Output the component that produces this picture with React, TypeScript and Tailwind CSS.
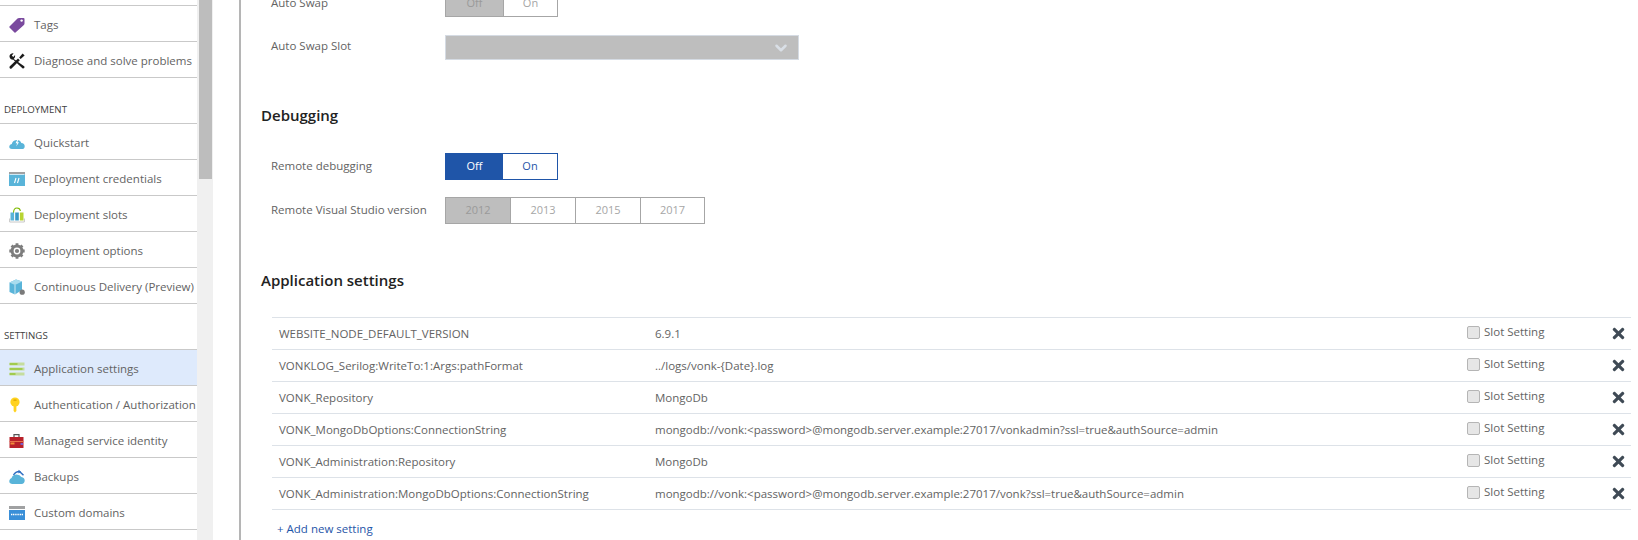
import { FaTimes } from "react-icons/fa";
import { ChevronDown } from "lucide-react";

function TagIcon() {
  return (
    <svg width="16" height="16" viewBox="0 0 16 16">
      <path d="M0.5 9.5 L8.5 1.5 Q9.2 0.9 10 0.9 L14.5 0.9 Q15.5 0.9 15.5 2 L15.5 6.5 Q15.5 7.3 14.9 7.9 L6.5 15.5 Q6 16 5.5 15.5 L0.5 10.5 Q0 10 0.5 9.5Z" fill="#7a4a9e" />
      <circle cx="12.6" cy="3.6" r="1.2" fill="#fff" />
    </svg>
  );
}

function ToolsIcon() {
  return (
    <svg width="16" height="16" viewBox="0 0 16 16">
      <path d="M0.6 13.6 L9 5.4 L10.8 7.2 L2.6 15.6 Q1.6 16 0.8 15.2 Q0.2 14.4 0.6 13.6Z" fill="#1b1b1b" />
      <path d="M10.2 4.6 L13.6 0.6 L15.6 2.4 L11.6 6Z" fill="#1b1b1b" />
      <path d="M0.5 4 Q0.3 1 3.6 0.3 L4.6 0.4 L2.8 2.4 L4.2 3.9 L6.1 2 Q6.6 4.8 4.8 6 L15.2 13.2 Q15.9 14 15.2 15 Q14.4 15.8 13.4 15.2 L4 6.6 Q1.4 7 0.5 4Z" fill="#1b1b1b" />
    </svg>
  );
}

function QuickstartIcon() {
  return (
    <svg width="16" height="16" viewBox="0 0 16 16">
      <path d="M3 14 Q0 14 0.3 11.3 Q0.5 9.2 2.8 9 Q3.4 5.5 7.5 5 Q11.5 5 12.3 8 Q15.7 8.4 15.7 11.2 Q15.7 14 13 14Z" fill="#59b4d9" />
      <path d="M8.8 3.5 L6.6 8.2 L8.2 8.2 L7.2 11.5 L10 7.2 L8.4 7.2 L9.6 3.5Z" fill="#fff" />
    </svg>
  );
}

function CredentialsIcon() {
  return (
    <svg width="16" height="16" viewBox="0 0 16 16">
      <rect x="0" y="1" width="16" height="14" fill="#59b4d9" />
      <rect x="0" y="1" width="16" height="2" fill="#a0a1a2" />
      <rect x="0.5" y="3" width="15" height="0.7" fill="#fff" />
      <path d="M5.5 12 L7 7 M8.5 12 L10 7" stroke="#fff" strokeWidth="1.1" />
    </svg>
  );
}

function SlotsIcon() {
  return (
    <svg width="16" height="16" viewBox="0 0 16 16">
      <path d="M4.5 6 Q4.5 1 8 1 Q11 1 11.4 4" fill="none" stroke="#7fba00" strokeWidth="1.1" />
      <rect x="1.5" y="5.5" width="3.6" height="8" fill="#59b4d9" />
      <rect x="6.2" y="5.5" width="3.6" height="8" fill="#3999c6" />
      <rect x="10.9" y="5.5" width="3.6" height="8" fill="#b8d432" />
      <path d="M0.6 11.5 V15 H15.4 V11.5" fill="none" stroke="#c8c8c8" strokeWidth="1" />
    </svg>
  );
}

function GearIcon() {
  return (
    <svg width="16" height="16" viewBox="0 0 16 16">
      <circle cx="8" cy="8" r="5" fill="none" stroke="#7d7d7d" strokeWidth="3" />
      <path d="M8 0.3 V15.7 M0.3 8 H15.7 M2.6 2.6 L13.4 13.4 M13.4 2.6 L2.6 13.4" stroke="#7d7d7d" strokeWidth="2.8" />
      <circle cx="8" cy="8" r="3.4" fill="#fff" />
      <circle cx="8" cy="8" r="2.1" fill="#7d7d7d" />
    </svg>
  );
}

function DeliveryIcon() {
  return (
    <svg width="16" height="16" viewBox="0 0 16 16">
      <path d="M0.5 3.5 L7 0.6 L13 2.5 L13 11 L6 15.5 L0.5 13Z" fill="#59b4d9" />
      <path d="M0.5 3.5 L6 6 L13 2.5 L7 0.6Z" fill="#a9dcee" />
      <path d="M6 6 V15.5" stroke="#fff" strokeWidth="0.7" />
      <circle cx="13.2" cy="13.2" r="2.6" fill="#7a7a7a" />
    </svg>
  );
}

function SettingsIcon() {
  return (
    <svg width="16" height="16" viewBox="0 0 16 16">
      <rect x="0.5" y="1.5" width="15" height="3" fill="#c5dd9e" />
      <rect x="0.5" y="6.5" width="15" height="3" fill="#c5dd9e" />
      <rect x="0.5" y="11.5" width="15" height="3" fill="#c5dd9e" />
      <rect x="0.5" y="2.5" width="8" height="1" fill="#7fba00" />
      <rect x="0.5" y="7.5" width="13" height="1" fill="#7fba00" />
      <rect x="0.5" y="12.5" width="6" height="1" fill="#7fba00" />
    </svg>
  );
}

function KeyIcon() {
  return (
    <svg width="16" height="16" viewBox="0 0 16 16">
      <circle cx="6" cy="5" r="4.6" fill="#ffd21f" />
      <path d="M4.6 8 H7.4 V14 L6 15.6 L4.6 14Z" fill="#ffd21f" />
      <rect x="4.4" y="2.6" width="3.2" height="1.2" rx="0.5" fill="#d9a300" />
    </svg>
  );
}

function ToolboxIcon() {
  return (
    <svg width="16" height="16" viewBox="0 0 16 16">
      <path d="M5 4 V1.6 H10 V4" fill="none" stroke="#555" strokeWidth="1.2" />
      <rect x="0.5" y="4" width="14" height="11" fill="#b8212a" />
      <rect x="0.5" y="8" width="14" height="1" fill="#e8734a" />
      <rect x="1.5" y="9.5" width="4" height="2" fill="#f28c38" />
      <rect x="11.5" y="10" width="2.5" height="2" fill="#7a5dc7" />
    </svg>
  );
}

function BackupIcon() {
  return (
    <svg width="16" height="16" viewBox="0 0 16 16">
      <path d="M3 15 Q0 14.6 0.3 11.8 Q0.7 9.5 2.6 9 Q3.5 5.5 7.5 5.5 Q11 5.5 12.3 8 Q15.7 8.6 15.7 11.6 Q15.5 15 12.5 15Z" fill="#59b4d9" />
      <path d="M4.5 6 Q6.5 2.5 10.5 2.5 L14.5 6.2" fill="none" stroke="#2f6fc2" strokeWidth="1.5" />
      <path d="M9.5 0.8 L12 2.8 L9.5 4.6Z" fill="#2f6fc2" />
    </svg>
  );
}

function DomainsIcon() {
  return (
    <svg width="16" height="16" viewBox="0 0 16 16">
      <rect x="0" y="1" width="16" height="14" fill="#3a8fd8" />
      <rect x="0" y="1" width="16" height="3" fill="#a0a1a2" />
      <rect x="0" y="4" width="16" height="1" fill="#fff" />
      <path d="M2 9.5 H14" stroke="#fff" strokeWidth="1.6" strokeDasharray="1.2 0.6" />
    </svg>
  );
}

function NavRow({ icon, label, active }: { icon: React.ReactNode; label: string; active?: boolean }) {
  return (
    <div className={`h-[36px] flex items-center pl-[9px] pt-[2px] border-b border-[#c9c9c9] ${active ? "bg-[#deeafc]" : ""}`}>
      <span className="w-[16px] h-[16px] flex-none">{icon}</span>
      <span className="ml-[9px] whitespace-nowrap">{label}</span>
    </div>
  );
}

function SectionHead({ label }: { label: string }) {
  return (
    <div className="h-[46px] flex items-end pb-[5.5px] pl-[4px] border-b border-[#c9c9c9] text-[9.7px] text-[#404040]">
      {label}
    </div>
  );
}

function Toggle({ on, items, widths }: { on?: boolean; items: string[]; widths: string[] }) {
  return (
    <div className={`flex border ${on ? "border-[#1f55a8]" : "border-[#a6a6a6]"}`}>
      {items.map((item, i) => (
        <div
          key={item}
          className={`${widths[i]} flex items-center justify-center text-[11px] ${i > 0 && !on ? "border-l border-[#a6a6a6]" : ""} ${
            i === 0 ? (on ? "bg-[#1f55a8] text-white" : "bg-[#bebebe] text-[#9a9a9a]") : on ? "text-[#1f55a8]" : "text-[#a6a6a6]"
          }`}
        >
          {item}
        </div>
      ))}
    </div>
  );
}

const settings = [
  ["WEBSITE_NODE_DEFAULT_VERSION", "6.9.1"],
  ["VONKLOG_Serilog:WriteTo:1:Args:pathFormat", "../logs/vonk-{Date}.log"],
  ["VONK_Repository", "MongoDb"],
  ["VONK_MongoDbOptions:ConnectionString", "mongodb://vonk:<password>@mongodb.server.example:27017/vonkadmin?ssl=true&authSource=admin"],
  ["VONK_Administration:Repository", "MongoDb"],
  ["VONK_Administration:MongoDbOptions:ConnectionString", "mongodb://vonk:<password>@mongodb.server.example:27017/vonk?ssl=true&authSource=admin"],
];

export default function App() {
  return (
    <div className="flex w-[1638px] h-[540px] overflow-hidden bg-white text-[11.5px] text-[#636363] font-['Open_Sans',sans-serif]">
      {/* Blade menu */}
      <div className="w-[197px] flex-none">
        <div className="h-[6px] border-b border-[#c9c9c9]" />
        <NavRow icon={<TagIcon />} label="Tags" />
        <NavRow icon={<ToolsIcon />} label="Diagnose and solve problems" />
        <SectionHead label="DEPLOYMENT" />
        <NavRow icon={<QuickstartIcon />} label="Quickstart" />
        <NavRow icon={<CredentialsIcon />} label="Deployment credentials" />
        <NavRow icon={<SlotsIcon />} label="Deployment slots" />
        <NavRow icon={<GearIcon />} label="Deployment options" />
        <NavRow icon={<DeliveryIcon />} label="Continuous Delivery (Preview)" />
        <SectionHead label="SETTINGS" />
        <NavRow active icon={<SettingsIcon />} label="Application settings" />
        <NavRow icon={<KeyIcon />} label="Authentication / Authorization" />
        <NavRow icon={<ToolboxIcon />} label="Managed service identity" />
        <NavRow icon={<BackupIcon />} label="Backups" />
        <NavRow icon={<DomainsIcon />} label="Custom domains" />
      </div>

      {/* Scrollbar */}
      <div className="w-[16px] flex-none bg-[#f0f0f0] px-[2px]">
        <div className="w-[13px] h-[179px] bg-[#bdbdbd]" />
      </div>

      {/* Main panel */}
      <div className="ml-[26px] flex-1 border-l-2 border-[#b5b5b5] pl-[20px] pr-[7px]">
        <div className="-mt-[10px] pl-[10px]">
          <div className="flex items-center">
            <div className="w-[174px] pb-[2px]">Auto Swap</div>
            <Toggle items={["Off", "On"]} widths={["w-[57px] h-[25px]", "w-[54px] h-[25px]"]} />
          </div>
          <div className="flex items-center mt-[18px]">
            <div className="w-[174px] pb-[3px]">Auto Swap Slot</div>
            <div className="w-[354px] h-[25px] bg-[#bebebe] border border-[#d5dbe3] flex items-center justify-end pr-[8px]">
              <ChevronDown size={18} strokeWidth={3.4} className="text-[#d9dfe6]" />
            </div>
          </div>
        </div>

        <h2 className="mt-[44px] h-[22px] leading-[22px] text-[15px] font-semibold text-[#222222]">Debugging</h2>

        <div className="mt-[27px] pl-[10px]">
          <div className="flex items-center">
            <div className="w-[174px] pb-[2px]">Remote debugging</div>
            <Toggle on items={["Off", "On"]} widths={["w-[57px] h-[25px]", "w-[54px] h-[25px]"]} />
          </div>
          <div className="flex items-center mt-[17px]">
            <div className="w-[174px] pb-[2px]">Remote Visual Studio version</div>
            <Toggle
              items={["2012", "2013", "2015", "2017"]}
              widths={["w-[64px] h-[25px]", "w-[65px] h-[25px]", "w-[65px] h-[25px]", "w-[64px] h-[25px]"]}
            />
          </div>
        </div>

        <h2 className="mt-[45px] h-[22px] leading-[22px] text-[15px] font-semibold text-[#222222]">Application settings</h2>

        <div className="mt-[26px] ml-[11px] border-t border-[#dde2e8]">
          {settings.map(([name, value]) => (
            <div key={name} className="h-[32px] flex items-center border-b border-[#dde2e8]">
              <div className="w-[383px] pl-[7px] flex-none whitespace-nowrap">{name}</div>
              <div className="flex-1 whitespace-nowrap">{value}</div>
              <div className="w-[143px] flex-none flex items-center pb-[3px]">
                <span className="w-[13px] h-[13px] rounded-[2px] bg-[#e6e6e6] border border-[#b5b5b5]" />
                <span className="ml-[4px]">Slot Setting</span>
              </div>
              <div className="w-[21px] flex-none pb-[1px]">
                <FaTimes size={17} className="text-[#3f4a55]" />
              </div>
            </div>
          ))}
        </div>
        <div className="mt-[10px] ml-[16px] text-[#1f55a8]">+ Add new setting</div>
      </div>
    </div>
  );
}
